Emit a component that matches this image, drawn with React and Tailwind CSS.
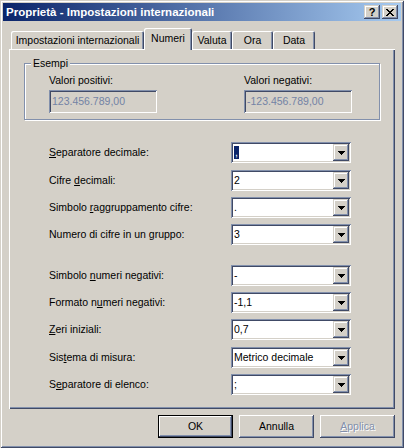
import React from "react";

const raisedBtn =
  "shadow-[inset_-1px_-1px_0_#404a66,inset_1px_1px_0_#ffffff,inset_-2px_-2px_0_#8290ac,inset_2px_2px_0_#d4d0c8]";
const raisedSmall =
  "shadow-[inset_-1px_-1px_0_#404a66,inset_1px_1px_0_#d4d0c8,inset_-2px_-2px_0_#8290ac,inset_2px_2px_0_#ffffff]";
const sunken =
  "shadow-[inset_1px_1px_0_#8290ac,inset_-1px_-1px_0_#ffffff,inset_2px_2px_0_#404a66,inset_-2px_-2px_0_#d4d0c8]";

const DownArrow = () => (
  <svg width="7" height="4" viewBox="0 0 7 4" shapeRendering="crispEdges">
    <path d="M0 0h7v1H0zM1 1h5v1H1zM2 2h3v1H2zM3 3h1v1H3z" fill="#000" />
  </svg>
);

const CloseGlyph = () => (
  <svg width="8" height="7" viewBox="0 0 8 7" shapeRendering="crispEdges">
    <path
      d="M0 0h2v1H0zM6 0h2v1H6zM1 1h2v1H1zM5 1h2v1H5zM2 2h4v1H2zM3 3h2v1H3zM2 4h4v1H2zM1 5h2v1H1zM5 5h2v1H5zM0 6h2v1H0zM6 6h2v1H6z"
      fill="#000"
    />
  </svg>
);

const Combo = ({ value, selected }) => (
  <div className={`w-[120px] h-[21px] bg-white flex p-[2px] ${sunken}`}>
    <div className="flex-1 flex items-center pl-[1px] leading-[13px]">
      {selected ? (
        <span className="bg-[#0a246a] text-white px-[1px]">{value}</span>
      ) : (
        value
      )}
    </div>
    <div className={`w-[16px] h-[17px] bg-[#d4d0c8] flex items-center justify-center ${raisedSmall}`}>
      <DownArrow />
    </div>
  </div>
);

const Row = ({ label, mt, children }) => (
  <div className={`flex items-center h-[21px] ml-[40px] ${mt}`}>
    <div className="w-[182px] leading-[13px]">{label}</div>
    {children}
  </div>
);

const Tab = ({ label, w, active }) =>
  active ? (
    <div
      className={`relative z-10 ${w} h-[22px] -mb-px bg-[#d4d0c8] rounded-t-[2px] pt-[4px] text-center leading-[13px] shadow-[inset_1px_1px_0_#ffffff,inset_-1px_0_0_#404a66,inset_-2px_0_0_#8290ac]`}
    >
      {label}
    </div>
  ) : (
    <div
      className={`${w} h-[18px] rounded-t-[2px] pt-[3px] text-center leading-[13px] shadow-[inset_1px_1px_0_#ffffff,inset_-1px_0_0_#404a66,inset_-2px_0_0_#8290ac]`}
    >
      {label}
    </div>
  );

const Field = ({ value }) => (
  <div className={`w-[108px] h-[23px] flex items-center pl-[3px] text-[#7383a5] leading-[13px] ${sunken}`}>
    {value}
  </div>
);

const App = () => {
  return (
    <div className="w-[404px] h-[448px] bg-[#d4d0c8] p-[3px] text-black text-[10.5px] font-['Liberation_Sans',Arial,sans-serif] shadow-[inset_1px_1px_0_#d4d0c8,inset_-1px_-1px_0_#404a66,inset_2px_2px_0_#ffffff,inset_-2px_-2px_0_#8290ac]">
      {/* title bar */}
      <div className="h-[18px] bg-linear-to-r/srgb from-[#0a246a] to-[#a6caf0] flex items-center justify-between pl-[3px] pr-[3px]">
        <span className="text-white font-bold text-[11.5px] leading-[14px]">
          Proprietà - Impostazioni internazionali
        </span>
        <div className="flex gap-[2px]">
          <div className={`w-[16px] h-[14px] bg-[#d4d0c8] flex items-center justify-center font-bold text-[11px] leading-[11px] ${raisedSmall}`}>
            ?
          </div>
          <div className={`w-[16px] h-[14px] bg-[#d4d0c8] flex items-center justify-center ${raisedSmall}`}>
            <CloseGlyph />
          </div>
        </div>
      </div>

      {/* tabs */}
      <div className="flex items-end h-[21px] mt-[7px] ml-[8px]">
        <Tab label="Impostazioni internazionali" w="w-[133px]" />
        <Tab label="Numeri" w="w-[48px]" active />
        <Tab label="Valuta" w="w-[40px]" />
        <Tab label="Ora" w="w-[41px]" />
        <Tab label="Data" w="w-[42px]" />
      </div>

      {/* panel */}
      <div className="ml-[6px] w-[386px] h-[360px] overflow-hidden shadow-[inset_1px_1px_0_#ffffff,inset_-1px_-1px_0_#404a66,inset_-2px_-2px_0_#8290ac]">
        <div className="relative mt-[14px] ml-[15px] w-[356px] h-[57px] border border-[#8290ac] shadow-[1px_1px_0_#ffffff,inset_1px_1px_0_#ffffff] pt-[10px] pl-[24px] flex">
          <span className="absolute left-[6px] -top-[7px] bg-[#d4d0c8] px-[2px] leading-[13px]">Esempi</span>
          <div className="w-[195px]">
            <div className="leading-[13px]">Valori positivi:</div>
            <div className="mt-[3px]">
              <Field value="123.456.789,00" />
            </div>
          </div>
          <div>
            <div className="leading-[13px]">Valori negativi:</div>
            <div className="mt-[3px]">
              <Field value="-123.456.789,00" />
            </div>
          </div>
        </div>

        <Row mt="mt-[22px]" label={<><span className="underline">S</span>eparatore decimale:</>}>
          <Combo value="," selected />
        </Row>
        <Row mt="mt-[7px]" label={<>Cifre <span className="underline">d</span>ecimali:</>}>
          <Combo value="2" />
        </Row>
        <Row mt="mt-[6px]" label={<>Simbolo <span className="underline">r</span>aggruppamento cifre:</>}>
          <Combo value="." />
        </Row>
        <Row mt="mt-[6px]" label="Numero di cifre in un gruppo:">
          <Combo value="3" />
        </Row>

        <Row mt="mt-[20px]" label={<>Simbolo <span className="underline">n</span>umeri negativi:</>}>
          <Combo value="-" />
        </Row>
        <Row mt="mt-[6px]" label={<>Formato n<span className="underline">u</span>meri negativi:</>}>
          <Combo value="-1,1" />
        </Row>
        <Row mt="mt-[6px]" label={<><span className="underline">Z</span>eri iniziali:</>}>
          <Combo value="0,7" />
        </Row>
        <Row mt="mt-[7px]" label={<>Sis<span className="underline">t</span>ema di misura:</>}>
          <Combo value="Metrico decimale" />
        </Row>
        <Row mt="mt-[6px]" label={<>S<span className="underline">e</span>paratore di elenco:</>}>
          <Combo value=";" />
        </Row>
      </div>

      {/* buttons */}
      <div className="flex justify-end gap-[6px] mt-[6px] pr-[6px]">
        <div className="border border-black">
          <div className={`w-[73px] h-[21px] flex items-center justify-center leading-[13px] ${raisedBtn}`}>OK</div>
        </div>
        <div className={`w-[75px] h-[23px] flex items-center justify-center leading-[13px] ${raisedBtn}`}>Annulla</div>
        <div className={`w-[75px] h-[23px] flex items-center justify-center leading-[13px] text-[#8290ac] [text-shadow:1px_1px_0_#ffffff] ${raisedBtn}`}>
          <span>
            <span className="underline">A</span>pplica
          </span>
        </div>
      </div>
    </div>
  );
};

export default App;
